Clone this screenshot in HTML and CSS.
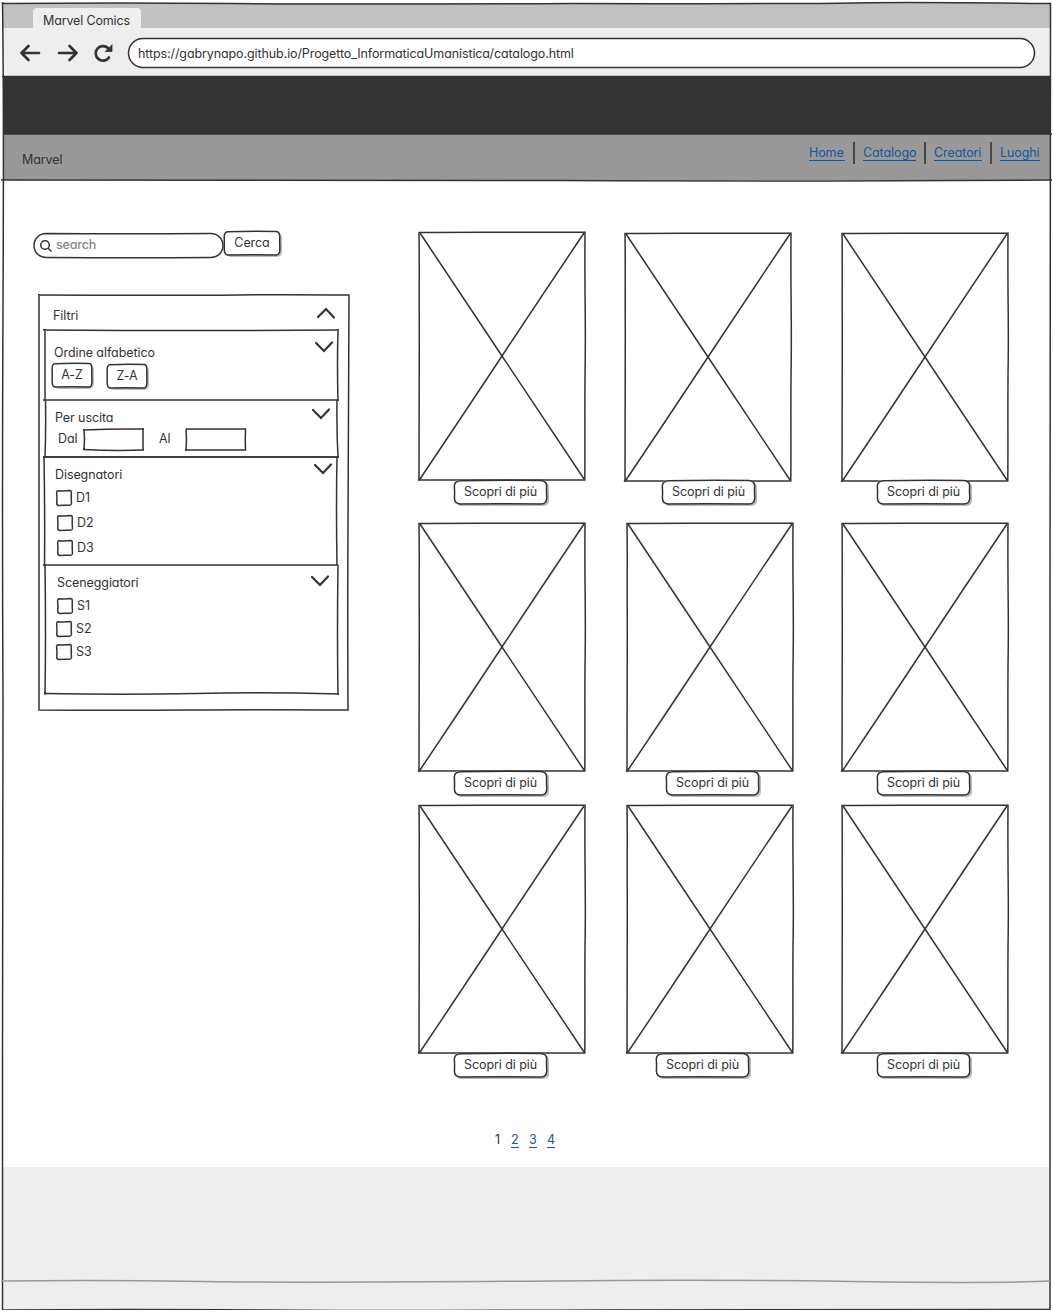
FILE: index.html
```
<!DOCTYPE html>
<html lang="it">
<head>
<meta charset="utf-8">
<title>Marvel Comics</title>
<link rel="stylesheet" href="styles.css">
</head>
<body>
<svg class="defs" aria-hidden="true">
  <symbol id="cover" viewBox="0 0 168 250">
    <path d="M1 1.500C50 .8 110 1.500 167 1.300C166.500 60 167.800 90 167.200 130C166.500 170 167.200 210 166.800 249C120 248.700 60 249.300 1 249C1.500 200 .8 150 1.300 100C1 60 1.500 30 1 1.500Z"/>
    <path d="M2 2Q42 62 84 125T166 248M166 2Q125 63 84 125T2 248"/>
    <path d="M0 249.500L3 247"/>
  </symbol>
  <symbol id="button" viewBox="0 0 92 24" preserveAspectRatio="none">
    <path vector-effect="non-scaling-stroke" d="M6 .7Q45 0 86 .5Q91.800 1 91.600 6Q91.300 12 91.800 18Q91.500 24 86 24Q45 23.500 6 24Q.5 23.500 .4 18Q.8 12 .3 6Q.5 1 6 .7Z"/>
  </symbol>
  <symbol id="down" viewBox="0 0 20 12"><path d="M2 2L10 10L18 1.500"/></symbol>
  <symbol id="check" viewBox="0 0 16 16"><path d="M2 .8Q8 1.300 14 .6Q15.600 1 15.300 3Q15 8 15.500 13.500Q15.200 15.500 13 15.300Q8 15 2.500 15.500Q.6 15 .8 13Q1.200 8 .6 2.500Q.8 .8 2 .8Z"/></symbol>
</svg>

<div class="window">
  <svg class="outline frame" viewBox="0 0 1047 1307">
    <path d="M-1 .5Q120 -.5 230 .5T570 .5Q800 1 850 0T1047.500 .5C1046.500 300 1047.500 450 1047 600C1046.500 850 1047.500 1100 1047 1306.500Q800 1306 600 1307T260 1307Q120 1306 -.5 1307Q-1 1180 -.5 1050T0 700Q-1 500 0 300T-.5 -1"/>
    <path d="M-1 73.500Q200 74 500 73.500T1047 73.500M0 131H1049M-2 177Q300 176.500 560 177.500T1049 177"/>
    <path class="status-line" d="M-2 1278Q100 1277 200 1278.500T550 1278Q700 1276.500 850 1278.500T1047 1278"/>
  </svg>
  <div class="tabs"><div class="tab"><span>Marvel Comics</span></div></div>
  <div class="toolbar">
    <svg class="tools" viewBox="0 0 96 22">
      <path d="M20 11H2.500M9.500 4L2.500 11L9.500 18M40 11H57.500M50.500 4L57.500 11L50.500 18"/>
      <path d="M90 15.500A7.300 7.300 0 1 1 89 6"/>
      <path class="solid" d="M93 3V9.500H86.500Z"/>
    </svg>
    <div class="address">
      <svg class="outline" viewBox="0 0 907 30"><path d="M15 .5Q300 1 470 .5T892 .5A14.500 14.500 0 0 1 892 29.500Q600 29 400 29.500T15 29.500A14.500 14.500 0 0 1 15 .5Z"/></svg>
      <span class="url">https://gabrynapo.github.io/Progetto_InformaticaUmanistica/catalogo.html</span>
    </div>
  </div>
  <div class="banner"></div>
  <nav class="navbar">
    <span class="brand">Marvel</span>
    <div class="links">
      <a class="home">Home</a><i></i><a class="catalogo">Catalogo</a><i></i><a class="creatori">Creatori</a><i></i><a class="luoghi">Luoghi</a>
    </div>
  </nav>

  <main>
    <aside>
      <div class="search-row">
        <div class="search">
          <svg class="outline" viewBox="0 0 190 25"><path d="M12 .5Q90 1 177 .5A12 12 0 0 1 177 24.500Q100 25 12 24.500A12 12 0 0 1 12 .5Z"/></svg>
          <svg class="glass" viewBox="0 0 13 13"><circle cx="5" cy="5" r="4.300"/><path d="M8 8L11.500 11.500"/></svg>
          <span>search</span>
        </div>
        <div class="btn cerca"><svg class="outline"><use href="#button"/></svg><span>Cerca</span></div>
      </div>

      <div class="panel">
        <svg class="outline" viewBox="0 0 309 415"><path d="M-1 0Q160 .5 200 0T310 0C309 120 309 180 309 230Q308.500 320 309 415Q220 414.500 150 415T0 415V-1"/></svg>
        <div class="head filtri"><span>Filtri</span><svg class="chevron flip"><use href="#down"/></svg></div>
        <section class="ordine">
          <svg class="outline" viewBox="0 0 293 70"><path d="M-2 0Q160 1 294 0M-2 70H294M0 -1V70M293 -1Q292 35 293 71"/></svg>
          <div class="head"><span>Ordine alfabetico</span><svg class="chevron"><use href="#down"/></svg></div>
          <div class="row">
            <div class="btn small"><svg class="outline"><use href="#button"/></svg><span>A-Z</span></div>
            <div class="btn small lower"><svg class="outline"><use href="#button"/></svg><span>Z-A</span></div>
          </div>
        </section>
        <section class="uscita">
          <svg class="outline" viewBox="0 0 293 57"><path d="M.5 0Q1 30 0 57H293Q291.500 30 292 0"/></svg>
          <div class="head"><span>Per uscita</span><svg class="chevron"><use href="#down"/></svg></div>
          <div class="row dates">
            <label>Dal</label>
            <div class="field"><svg class="outline" viewBox="0 0 59 21"><path d="M-1 1Q30 -.5 60 0M59 -1V22M-1 20.500Q30 22 60 21M0 0Q1 10 0 21"/></svg></div>
            <label class="al">Al</label>
            <div class="field"><svg class="outline" viewBox="0 0 59 21"><path d="M0 0H59.500Q59 10 59.500 21H-1M0 22Q1 10 0 0"/></svg></div>
          </div>
        </section>
        <section class="disegnatori">
          <svg class="outline" viewBox="0 0 293 108"><path d="M-2 0Q220 0 294 0M-1 -1Q0 60 -.5 109M-2 108H293M292 0Q291 50 292 108"/></svg>
          <div class="head"><span>Disegnatori</span><svg class="chevron"><use href="#down"/></svg></div>
          <div class="check"><svg><use href="#check"/></svg><span>D1</span></div>
          <div class="check inset"><svg><use href="#check"/></svg><span>D2</span></div>
          <div class="check inset"><svg><use href="#check"/></svg><span>D3</span></div>
        </section>
        <section class="sceneggiatori">
          <svg class="outline" viewBox="0 0 293 129"><path d="M0 0Q1 70 0 130M-1 128.500Q80 130 150 128.500T294 129M293 0Q292 70 293 130"/></svg>
          <div class="head"><span>Sceneggiatori</span><svg class="chevron"><use href="#down"/></svg></div>
          <div class="check inset"><svg><use href="#check"/></svg><span>S1</span></div>
          <div class="check"><svg><use href="#check"/></svg><span>S2</span></div>
          <div class="check"><svg><use href="#check"/></svg><span>S3</span></div>
        </section>
      </div>
    </aside>

    <div class="catalog">
      <div class="shelf first">
        <article><svg class="cover"><use href="#cover"/></svg><div class="btn more"><svg class="outline"><use href="#button"/></svg><span>Scopri di più</span></div></article>
        <article class="mid"><svg class="cover"><use href="#cover"/></svg><div class="btn more b38"><svg class="outline"><use href="#button"/></svg><span>Scopri di più</span></div></article>
        <article class="last"><svg class="cover"><use href="#cover"/></svg><div class="btn more"><svg class="outline"><use href="#button"/></svg><span>Scopri di più</span></div></article>
      </div>
      <div class="shelf">
        <article><svg class="cover"><use href="#cover"/></svg><div class="btn more"><svg class="outline"><use href="#button"/></svg><span>Scopri di più</span></div></article>
        <article><svg class="cover"><use href="#cover"/></svg><div class="btn more b40"><svg class="outline"><use href="#button"/></svg><span>Scopri di più</span></div></article>
        <article><svg class="cover"><use href="#cover"/></svg><div class="btn more"><svg class="outline"><use href="#button"/></svg><span>Scopri di più</span></div></article>
      </div>
      <div class="shelf">
        <article><svg class="cover"><use href="#cover"/></svg><div class="btn more"><svg class="outline"><use href="#button"/></svg><span>Scopri di più</span></div></article>
        <article><svg class="cover"><use href="#cover"/></svg><div class="btn more b30"><svg class="outline"><use href="#button"/></svg><span>Scopri di più</span></div></article>
        <article><svg class="cover"><use href="#cover"/></svg><div class="btn more"><svg class="outline"><use href="#button"/></svg><span>Scopri di più</span></div></article>
      </div>
      <div class="pager"><span>1</span><a>2</a><a>3</a><a>4</a></div>
    </div>
  </main>
  <footer></footer>
</div>
</body>
</html>
```
FILE: styles.css
```
* { box-sizing: border-box; }
body {
  margin: 0;
  background: #fff;
  color: #333;
  font: 12.5px/16px Inter, "Liberation Sans", sans-serif;
  font-feature-settings: "cv11" 1;
  letter-spacing: -.08px;
}
svg { display: block; fill: none; stroke: #333; stroke-width: 1.5; overflow: visible; flex: none; }
symbol { overflow: visible; }
.defs { position: absolute; width: 0; height: 0; }
span, a, label { white-space: nowrap; }

.window { position: relative; width: 1047px; height: 1307px; margin: 3px 0 0 3px; display: flex; flex-direction: column; }
.outline { position: absolute; left: 0; top: 0; width: 100%; height: 100%; pointer-events: none; }
.frame { z-index: 2; }
.status-line { stroke: #999; }

.tabs { height: 25px; padding: 5px 0 0 30px; background: #c1c1c1; }
.tab { width: 108px; height: 20px; padding: 5px 0 0 10px; background: #eee; border-radius: 4px 4px 0 0; letter-spacing: -.15px; }
.toolbar { height: 49px; padding: 10px 15px 0 16px; display: flex; background: #eee; }
.tools { width: 96px; height: 22px; margin: 4px 13px 0 0; stroke-width: 2.7; stroke-linecap: round; stroke-linejoin: round; }
.tools .solid { fill: #333; stroke-width: .8; }
.address { position: relative; width: 907px; height: 30px; padding: 8px 10px; background: #fff; border-radius: 15px; }
.url { letter-spacing: -.1px; }
.banner { height: 57px; background: #333; }
.navbar { height: 46px; padding: 0 10px 0 19px; display: flex; justify-content: space-between; background: #999; }
.brand { margin-top: 18px; }
.links { display: flex; padding-top: 8px; }
.links a { height: 17px; margin-top: 2px; padding-top: 1px; line-height: 15px; border-bottom: 1px solid #0d5a9d; color: #0d5a9d; }
.links i { width: 2px; height: 22px; margin: 0 8px; background: #484848; }
.home { width: 36px; }
.catalogo { width: 53px; }
.creatori { width: 48px; }
.luoghi { width: 40px; }

main { height: 987px; display: flex; }
aside { width: 415px; padding: 51px 0 0 31px; }
.search-row { display: flex; align-items: flex-start; }
.search { position: relative; width: 190px; height: 25px; margin-top: 2px; padding: 4px 0 0 6px; display: flex; color: #85858d; font-weight: 500; letter-spacing: -.15px; }
.glass { width: 13px; height: 13px; margin: 3px 3px 0 0; }
.btn { position: relative; height: 24px; text-align: center; line-height: 24px; background: #fff; border-radius: 5px; box-shadow: 2px 2px 0 #bbb; }
.btn span { position: relative; }
.cerca { width: 56px; }

.panel { position: relative; width: 309px; height: 415px; margin: 37px 0 0 5px; }
.head { display: flex; justify-content: space-between; height: 16px; }
.chevron { width: 20px; height: 12px; stroke-width: 2.2; stroke-linecap: round; }
.flip { transform: scaleY(-1); }
.filtri { height: 35px; padding: 13px 12px 0 14px; }
.filtri .chevron { margin-top: -1px; }
section { position: relative; width: 293px; margin-left: 6px; }
.ordine { height: 70px; padding: 15px 4px 0 9px; }
.ordine .chevron { margin-top: -4px; }
.row { display: flex; }
.ordine .row { gap: 15px; margin: 2px 0 0 -2px; }
.small { width: 40px; }
.lower { margin-top: 1px; }
.uscita { height: 57px; padding: 10px 7px 0 10px; }
.uscita .chevron { margin-top: -2px; }
.dates { margin: 3px 0 0 3px; }
.dates label { width: 26px; margin-top: 2px; }
.dates .al { width: 27px; margin-left: 16px; }
.field { position: relative; width: 59px; height: 21px; }
.disegnatori { height: 108px; padding: 10px 5px 0 10px; }
.disegnatori .chevron { margin-top: -4px; }
.check { display: flex; height: 16px; gap: 4px; margin: 0 0 9px 1px; }
.check svg { width: 16px; height: 16px; }
.inset { margin-left: 2px; }
.disegnatori .head { margin-bottom: 7px; }
.sceneggiatori { height: 129px; padding: 10px 8px 0 10px; }
.sceneggiatori .head { padding-left: 2px; margin-bottom: 7px; }
.sceneggiatori .check { margin-bottom: 7px; }

.catalog { padding-top: 51px; }
.shelf { display: grid; grid-template-columns: 208px 215px 168px; height: 282px; }
.first { height: 291px; }
.cover { width: 168px; height: 250px; }
.more { width: 93px; margin: -1px 0 0 36px; }
.b38 { margin-left: 38px; }
.b40 { margin-left: 40px; }
.b30 { margin-left: 30px; }
.mid { margin: 1px 0 0 -2px; }
.mid .more, .last .more { margin-top: -2px; }
.last { margin-top: 1px; }
.pager { display: flex; gap: 10px; margin: 46px 0 0 77px; }
.pager a { width: 8px; height: 16px; border-bottom: 1px solid #0d5a9d; color: #0d5a9d; }
.pager span { width: 6px; }
footer { height: 143px; background: #eee; }
```
